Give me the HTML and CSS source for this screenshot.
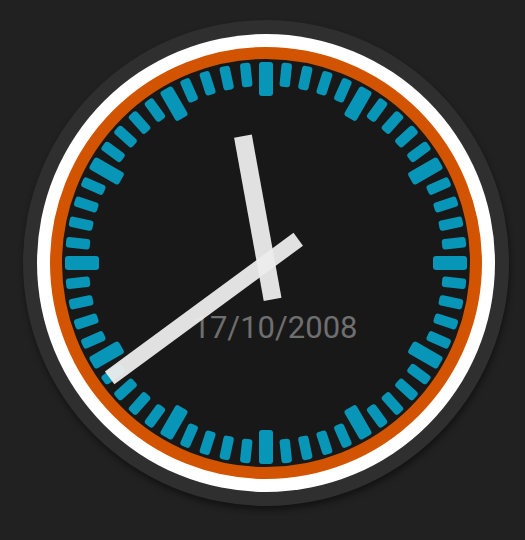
FILE: index.html
```html
<!DOCTYPE html>
<html lang="en">
<head>
  <meta charset="UTF-8">
  <meta name="viewport" content="width=device-width, initial-scale=1.0">
  <title>Clock</title>
  <link rel="stylesheet" href="styles.css">
</head>
<body>
  <div class="bezel">
    <div class="rim">
      <div class="dial">
        <svg class="face" viewBox="-204 -204 408 408" width="408" height="408">
          <g id="ticks"></g>
          <text class="date" x="9" y="75">17/10/2008</text>
          <!-- hands -->
          <rect class="hand" x="-9" y="-129" width="18" height="166" transform="rotate(-10.3)"/>
          <rect class="hand" x="-8" y="-194" width="16" height="234" transform="rotate(233.7)"/>
        </svg>
      </div>
    </div>
  </div>

  <script>
    // Build the 60 minute marks, every 5th one is bigger
    const ticks = document.getElementById("ticks");
    for (let i = 0; i < 60; i++) {
      const tick = document.createElementNS("http://www.w3.org/2000/svg", "rect");
      const major = i % 5 === 0;
      const w = major ? 14 : 10.5;
      const h = major ? 34 : 24;
      tick.setAttribute("x", -w / 2);
      tick.setAttribute("y", -201);
      tick.setAttribute("width", w);
      tick.setAttribute("height", h);
      tick.setAttribute("rx", 3);
      tick.setAttribute("class", "tick");
      tick.setAttribute("transform", `rotate(${i * 6})`);
      ticks.appendChild(tick);
    }
  </script>
</body>
</html>
```

FILE: styles.css
```css
body {
  margin: 0;
  width: 525px;
  height: 540px;
  background-color: #212121;
  padding: 20px 0 0 23px;
  box-sizing: border-box;
  font-family: Roboto, "Liberation Sans", sans-serif;
  overflow: hidden;
}

.bezel {
  width: 486px;
  height: 486px;
  border-radius: 50%;
  background-color: #2f2f2f;
  box-shadow: 1px 4px 6px rgba(0, 0, 0, 0.45);
  display: flex;
  justify-content: center;
  align-items: center;
}

.rim {
  width: 458px;
  height: 458px;
  border-radius: 50%;
  background-color: #ffffff;
  display: flex;
  justify-content: center;
  align-items: center;
}

.dial {
  width: 432px;
  height: 432px;
  box-sizing: border-box;
  border: 12px solid #d35400;
  border-radius: 50%;
  background-color: #181818;
}

.face {
  display: block;
}

.tick {
  fill: #0896b8;
}

.date {
  font-family: Roboto, "Liberation Sans", sans-serif;
  font-size: 31px;
  fill: #6f6f6f;
  text-anchor: middle;
}

.hand {
  fill: #ececec;
  opacity: 0.95;
}
```
